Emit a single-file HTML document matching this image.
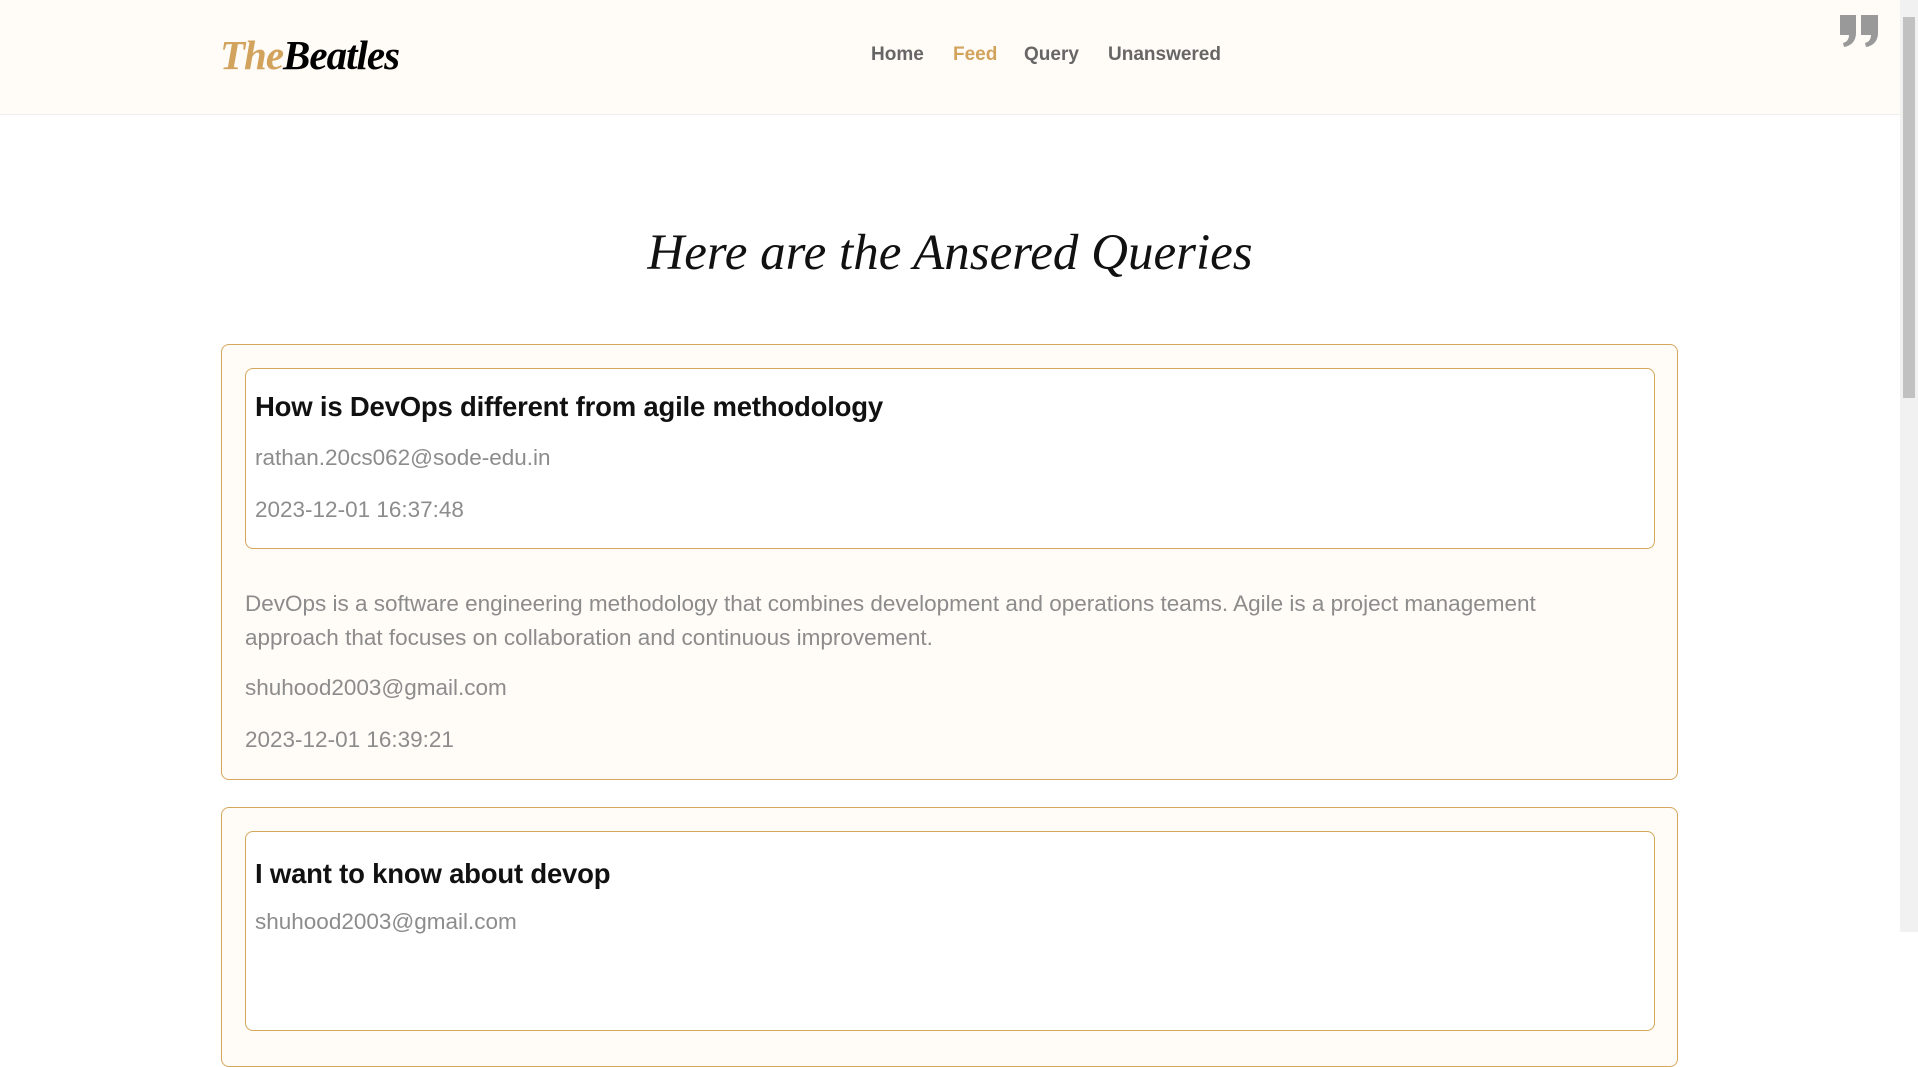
<!DOCTYPE html>
<html><head><meta charset="utf-8"><style>
*{margin:0;padding:0;box-sizing:border-box}
body{width:1918px;height:932px;overflow:hidden;background:#fff;font-family:"Liberation Sans",sans-serif;position:relative}
.hdr{position:absolute;left:0;top:0;width:1900px;height:115px;background:#fffbf6;border-bottom:1px solid #eee}
.logo{position:absolute;left:220px;top:30px;font-family:"Liberation Serif",serif;font-style:italic;font-weight:bold;font-size:41px;letter-spacing:-1px;line-height:50px}
.logo span{color:#d2a35c}
.nav a{position:absolute;top:43px;font-size:19px;color:#666;text-decoration:none;font-weight:bold;line-height:24px}
.sb{position:absolute;right:0;top:0;width:18px;height:932px;background:#f1f1f1}
.sb div{position:absolute;left:3px;top:17px;width:12px;height:381px;background:#c1c1c1}
h1{position:absolute;left:0;width:1900px;top:220px;text-align:center;font-family:"Liberation Serif",serif;font-style:italic;font-weight:normal;font-size:51px;line-height:66px;color:#111}
.card{position:absolute;left:221px;width:1457px;background:#fffbf6;border:1px solid #d4a75c;border-radius:8px}
.inner{position:absolute;left:23px;width:1410px;background:#fff;border:1px solid #d4a75c;border-radius:8px}
.t{position:absolute;font-size:27.5px;font-weight:bold;color:#111;white-space:nowrap;letter-spacing:-0.2px}
.g{position:absolute;font-size:22.5px;color:#8c8c8c;white-space:nowrap}
</style></head><body>
<div class="hdr">
<div class="logo"><span>The</span>Beatles</div>
<div class="nav">
<a style="left:871px">Home</a><a style="left:953px;color:#d2a35c">Feed</a><a style="left:1024px">Query</a><a style="left:1108px">Unanswered</a>
</div>
<svg style="position:absolute;left:1840px;top:15px" width="38" height="32" viewBox="0 0 38 32"><path fill="#999" d="M0 0h16v18c0 8-5 13-12 14l-1-4c4-1 6-4 6-8H0z M21 0h17v18c0 8-5 13-12 14l-1-4c4-1 6-4 6-8h-10z"/></svg>
</div>
<div class="sb"><div></div></div>
<h1>Here are the Ansered Queries</h1>
<div class="card" style="top:344px;height:436px">
<div class="inner" style="top:23px;height:181px">
<div class="t" style="left:9px;top:22px">How is DevOps different from agile methodology</div>
<div class="g" style="left:9px;top:76px">rathan.20cs062@sode-edu.in</div>
<div class="g" style="left:9px;top:128px">2023-12-01 16:37:48</div>
</div>
<div class="g" style="left:23px;top:242px;white-space:normal;width:1390px;line-height:34px">DevOps is a software engineering methodology that combines development and operations teams. Agile is a project management approach that focuses on collaboration and continuous improvement.</div>
<div class="g" style="left:23px;top:330px">shuhood2003@gmail.com</div>
<div class="g" style="left:23px;top:382px">2023-12-01 16:39:21</div>
</div>
<div class="card" style="top:807px;height:260px">
<div class="inner" style="top:23px;height:200px">
<div class="t" style="left:9px;top:26px">I want to know about devop</div>
<div class="g" style="left:9px;top:77px">shuhood2003@gmail.com</div>
</div>
</div>
</body></html>
